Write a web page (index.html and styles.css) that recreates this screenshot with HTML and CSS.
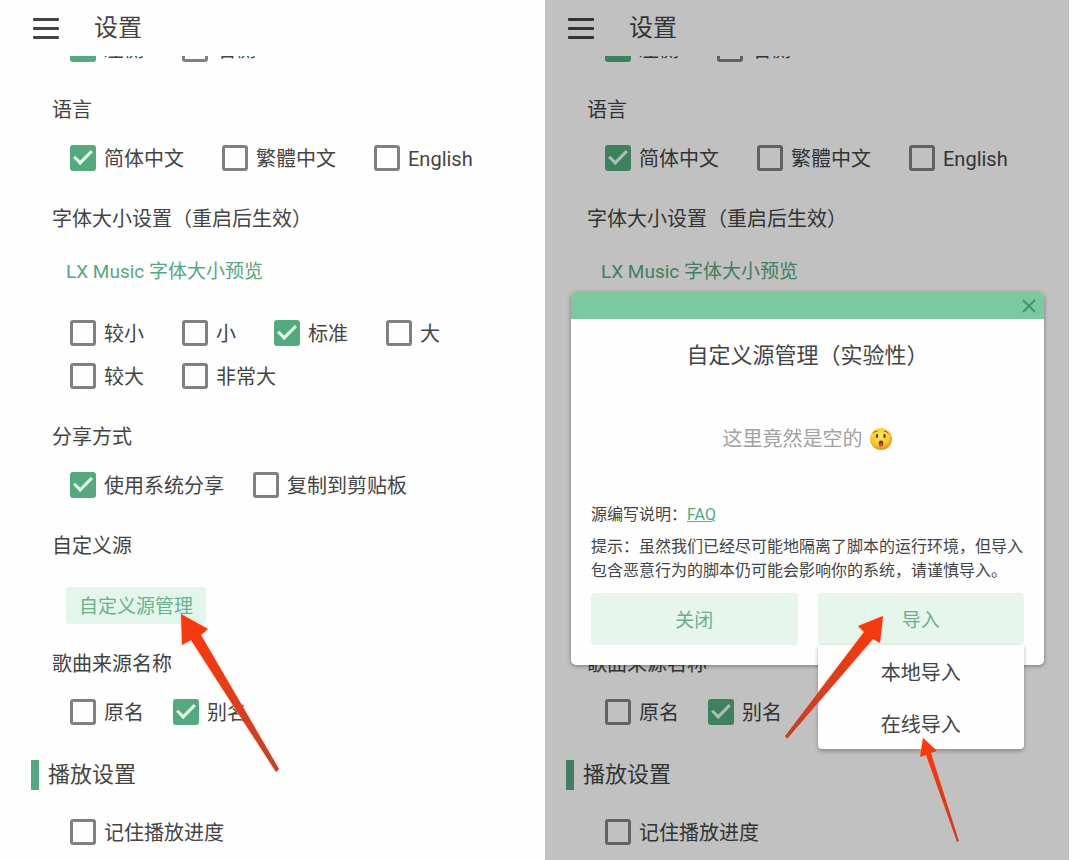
FILE: index.html
```html
<!DOCTYPE html>
<html lang="zh-CN">
<head>
    <meta charset="UTF-8">
    <meta name="viewport" content="width=device-width, initial-scale=1.0">
    <title>设置</title>
    <link rel="stylesheet" href="styles.css">
</head>
<body>
    <div class="guide">
        <!-- Step 1: settings page -->
        <section class="screen">
            <header class="topbar">
                <button class="menu-btn" aria-label="菜单"><span></span><span></span><span></span></button>
                <h1>设置</h1>
            </header>
            <main class="scroll">
                <div class="content">
                    <div class="options">
                        <label class="option"><input type="checkbox" checked>左侧</label>
                        <label class="option"><input type="checkbox">右侧</label>
                    </div>

                    <h3>语言</h3>
                    <div class="options">
                        <label class="option"><input type="checkbox" checked>简体中文</label>
                        <label class="option"><input type="checkbox">繁體中文</label>
                        <label class="option"><input type="checkbox">English</label>
                    </div>

                    <h3>字体大小设置（重启后生效）</h3>
                    <p class="preview">LX Music 字体大小预览</p>
                    <div class="options">
                        <label class="option"><input type="checkbox">较小</label>
                        <label class="option"><input type="checkbox">小</label>
                        <label class="option"><input type="checkbox" checked>标准</label>
                        <label class="option"><input type="checkbox">大</label>
                        <label class="option"><input type="checkbox">较大</label>
                        <label class="option"><input type="checkbox">非常大</label>
                    </div>

                    <h3>分享方式</h3>
                    <div class="options tight">
                        <label class="option"><input type="checkbox" checked>使用系统分享</label>
                        <label class="option"><input type="checkbox">复制到剪贴板</label>
                    </div>

                    <h3>自定义源</h3>
                    <div class="source">
                        <button class="source-btn">自定义源管理</button>
                        <svg class="arrow arrow-source" width="100" height="160" viewBox="0 0 100 160" aria-hidden="true">
                            <defs>
                                <linearGradient id="red1" x1="0" y1="0" x2="1" y2="1">
                                    <stop offset="0.2" stop-color="#f53a10"/>
                                    <stop offset="1" stop-color="#b8452f"/>
                                </linearGradient>
                            </defs>
                            <path fill="url(#red1)" d="M1 1 28 16 21 22 99 156 96 159 11 27 2 32Z"/>
                        </svg>
                    </div>

                    <h3>歌曲来源名称</h3>
                    <div class="options tight">
                        <label class="option"><input type="checkbox">原名</label>
                        <label class="option"><input type="checkbox" checked>别名</label>
                    </div>

                    <h2>播放设置</h2>
                    <div class="options">
                        <label class="option"><input type="checkbox">记住播放进度</label>
                    </div>
                </div>
            </main>
        </section>

        <!-- Step 2: source dialog opened -->
        <section class="screen">
            <header class="topbar">
                <button class="menu-btn" aria-label="菜单"><span></span><span></span><span></span></button>
                <h1>设置</h1>
            </header>
            <main class="scroll">
                <div class="content">
                    <div class="options">
                        <label class="option"><input type="checkbox" checked>左侧</label>
                        <label class="option"><input type="checkbox">右侧</label>
                    </div>

                    <h3>语言</h3>
                    <div class="options">
                        <label class="option"><input type="checkbox" checked>简体中文</label>
                        <label class="option"><input type="checkbox">繁體中文</label>
                        <label class="option"><input type="checkbox">English</label>
                    </div>

                    <h3>字体大小设置（重启后生效）</h3>
                    <p class="preview">LX Music 字体大小预览</p>
                    <div class="options">
                        <label class="option"><input type="checkbox">较小</label>
                        <label class="option"><input type="checkbox">小</label>
                        <label class="option"><input type="checkbox" checked>标准</label>
                        <label class="option"><input type="checkbox">大</label>
                        <label class="option"><input type="checkbox">较大</label>
                        <label class="option"><input type="checkbox">非常大</label>
                    </div>

                    <h3>分享方式</h3>
                    <div class="options tight">
                        <label class="option"><input type="checkbox" checked>使用系统分享</label>
                        <label class="option"><input type="checkbox">复制到剪贴板</label>
                    </div>

                    <h3>自定义源</h3>
                    <div class="source">
                        <button class="source-btn">自定义源管理</button>
                    </div>

                    <h3>歌曲来源名称</h3>
                    <div class="options tight">
                        <label class="option"><input type="checkbox">原名</label>
                        <label class="option"><input type="checkbox" checked>别名</label>
                    </div>

                    <h2>播放设置</h2>
                    <div class="options">
                        <label class="option"><input type="checkbox">记住播放进度</label>
                    </div>
                </div>
            </main>

            <div class="overlay">
                <div class="dialog" role="dialog" aria-labelledby="dialogTitle">
                    <div class="dialog-bar">
                        <button class="close-btn" aria-label="关闭">
                            <svg width="14" height="14" viewBox="0 0 14 14" fill="none" stroke="#429669" stroke-width="2"><path d="M1 1 13 13M13 1 1 13"/></svg>
                        </button>
                    </div>
                    <div class="dialog-body">
                        <h2 class="dialog-title" id="dialogTitle">自定义源管理（实验性）</h2>
                        <p class="empty">这里竟然是空的
                            <svg class="face" width="24" height="24" viewBox="0 0 24 24" aria-hidden="true">
                                <defs>
                                    <radialGradient id="skin" cx="0.45" cy="0.35" r="0.65">
                                        <stop offset="0" stop-color="#ffe65c"/>
                                        <stop offset="0.65" stop-color="#f8c82e"/>
                                        <stop offset="1" stop-color="#d8951b"/>
                                    </radialGradient>
                                </defs>
                                <circle cx="12" cy="12" r="11" fill="url(#skin)"/>
                                <path d="M4 6.500Q5.500 4 8.500 4.300M15 4.300Q18 4 19.500 6.500" fill="none" stroke="#9a6416"/>
                                <ellipse cx="8" cy="9" rx="1.200" ry="1.900" fill="#5b3510"/>
                                <ellipse cx="15.500" cy="9" rx="1.200" ry="1.900" fill="#5b3510"/>
                                <ellipse cx="12" cy="16.500" rx="2.300" ry="2.900" fill="#8a3212"/>
                                <ellipse cx="12" cy="17.800" rx="1.600" ry="1.300" fill="#e0553a"/>
                            </svg>
                        </p>
                        <p class="faq">源编写说明：<a href="#">FAQ</a></p>
                        <p class="tip">提示：虽然我们已经尽可能地隔离了脚本的运行环境，但导入包含恶意行为的脚本仍可能会影响你的系统，请谨慎导入。</p>
                        <div class="actions">
                            <button class="action-btn">关闭</button>
                            <div class="import">
                                <button class="action-btn">导入</button>
                                <div class="import-menu">
                                    <button>本地导入</button>
                                    <button>在线导入</button>
                                    <svg class="arrow arrow-online" width="40" height="105" viewBox="0 0 40 105" aria-hidden="true">
                                        <defs>
                                            <linearGradient id="red3" x1="0" y1="0" x2="0" y2="1">
                                                <stop offset="0.1" stop-color="#f53a10"/>
                                                <stop offset="1" stop-color="#b8452f"/>
                                            </linearGradient>
                                        </defs>
                                        <path fill="url(#red3)" d="M4 0 18 13 12 15 40 103 38 104 7 17 1 19Z"/>
                                    </svg>
                                </div>
                                <svg class="arrow arrow-import" width="100" height="124" viewBox="0 0 100 124" aria-hidden="true">
                                    <defs>
                                        <linearGradient id="red2" x1="1" y1="0" x2="0" y2="1">
                                            <stop offset="0.1" stop-color="#f53a10"/>
                                            <stop offset="1" stop-color="#b8452f"/>
                                        </linearGradient>
                                    </defs>
                                    <path fill="url(#red2)" d="M99 0 74 10 80 16 1 120 3 123 89 23 96 27Z"/>
                                </svg>
                            </div>
                        </div>
                    </div>
                </div>
            </div>
        </section>
    </div>
</body>
</html>
```
FILE: styles.css
```css
* {
    box-sizing: border-box;
}

body {
    margin: 0;
    background: #fefefe;
    color: #444;
    font-family: Roboto, "Noto Sans CJK SC", sans-serif;
    font-size: 20px;
    line-height: 24px;
}

h1, h2, h3, p {
    margin: 0;
    font-weight: normal;
}

button {
    border: none;
    padding: 0;
    background: none;
    color: inherit;
    font: inherit;
    cursor: pointer;
}

.guide {
    display: grid;
    grid-template-columns: 1fr 1fr;
    gap: 11px;
    height: 100vh;
    padding: 0 11px 0 10px;
}

.screen {
    position: relative;
    display: flex;
    flex-direction: column;
    min-width: 0;
    min-height: 0;
}

/* Top bar */
.topbar {
    display: flex;
    flex: none;
    align-items: center;
    gap: 35px;
    height: 56px;
    padding-left: 23px;
}

.topbar h1 {
    font-size: 24px;
    line-height: 56px;
}

.menu-btn {
    display: flex;
    flex-direction: column;
    gap: 6px;
    width: 26px;
}

.menu-btn span {
    height: 3px;
    border-radius: 1px;
    background: #444;
}

/* Settings list */
.scroll {
    flex: 1;
    min-height: 0;
    overflow: hidden;
}

.content {
    margin-top: -29px;
    padding-left: 42px;
}

.content h3 {
    margin: 28px 0 14px;
    font-size: 20px;
    line-height: 24px;
}

.content h2 {
    margin: 27px 0 20px -21px;
    padding-left: 9px;
    border-left: 8px solid #58a681;
    font-size: 22px;
    line-height: 30px;
}

.options {
    display: flex;
    flex-wrap: wrap;
    column-gap: 38px;
    padding-left: 18px;
}

.options.tight {
    column-gap: 29px;
}

.option {
    display: flex;
    align-items: center;
    gap: 8px;
    height: 43px;
    padding-top: 3px;
}

.option input {
    appearance: none;
    display: grid;
    place-items: center;
    width: 26px;
    height: 26px;
    margin: 0 0 3px;
    border: 3px solid #808080;
    border-radius: 3px;
}

.option input:checked {
    border-color: #54aa7e;
    background: #54aa7e;
}

.option input:checked::after {
    content: "";
    width: 15px;
    height: 7px;
    margin-bottom: 6px;
    border: solid #e4fbee;
    border-width: 0 0 3px 3px;
    transform: rotate(-45deg);
}

.preview {
    margin: 24px 0 22px;
    padding-left: 14px;
    color: #55a880;
    font-size: 19px;
    line-height: 34px;
}

.source {
    position: relative;
    display: flex;
    margin-top: 29px;
    padding-left: 14px;
}

.source-btn {
    height: 37px;
    padding: 3px 13px 0;
    border-radius: 4px;
    background: #e4f5eb;
    color: #69b18d;
    font-size: 19px;
}

/* Dialog */
.overlay {
    position: absolute;
    inset: 0;
    padding: 292px 25px 0 26px;
    background: rgba(0, 0, 0, 0.24);
}

.dialog {
    border-radius: 5px;
    background: #fefefe;
    box-shadow: 0 1px 4px rgba(0, 0, 0, 0.4);
}

.dialog-bar {
    display: flex;
    align-items: center;
    justify-content: flex-end;
    height: 27px;
    padding-right: 8px;
    border-radius: 5px 5px 0 0;
    background: #7cc9a0;
}

.close-btn {
    display: flex;
}

.dialog-body {
    padding: 20px;
}

.dialog-title {
    font-size: 22px;
    line-height: 34px;
    text-align: center;
}

.empty {
    display: flex;
    align-items: center;
    justify-content: center;
    gap: 6px;
    margin: 54px 0 52px;
    color: #a2a2a2;
}

.faq,
.tip {
    font-size: 16px;
    line-height: 24px;
}

.faq {
    margin-bottom: 8px;
}

.faq a {
    color: #55a880;
}

.actions {
    display: grid;
    grid-template-columns: 1fr 1fr;
    gap: 20px;
    margin-top: 10px;
}

.action-btn {
    width: 100%;
    height: 52px;
    padding-top: 3px;
    border-radius: 4px;
    background: #e6f6ec;
    color: #69b18d;
    font-size: 19px;
}

.import {
    position: relative;
}

.import-menu {
    position: absolute;
    top: 100%;
    left: 0;
    width: 100%;
    border-radius: 0 0 4px 4px;
    background: #fefefe;
    box-shadow: 0 2px 4px rgba(0, 0, 0, 0.3);
}

.import-menu button {
    display: block;
    width: 100%;
    height: 52px;
    padding-top: 3px;
}

/* Red pointers */
.arrow {
    position: absolute;
    pointer-events: none;
    filter: drop-shadow(0 0 1px #ffb59c);
}

.arrow-source {
    top: 26px;
    left: 128px;
}

.arrow-import {
    top: 23px;
    left: -34px;
}

.arrow-online {
    top: 93px;
    left: 101px;
}
```
